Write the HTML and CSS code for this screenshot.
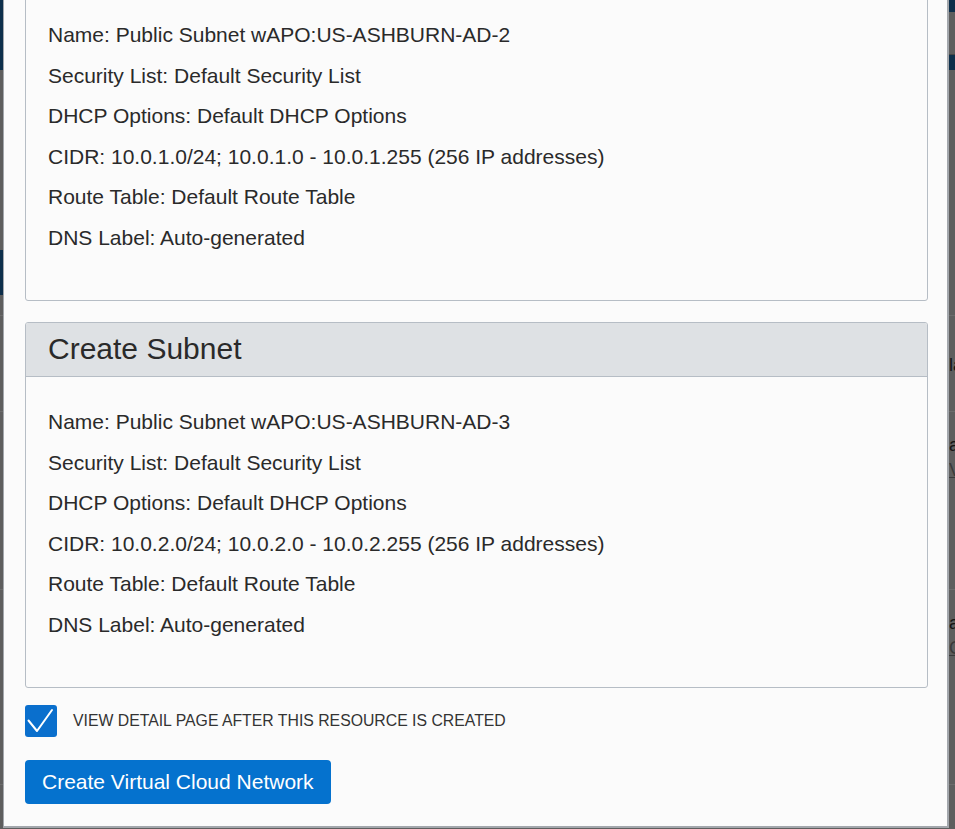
FILE: index.html
```html
<!DOCTYPE html>
<html lang="en">
<head>
<meta charset="utf-8">
<title>Create Virtual Cloud Network</title>
<link rel="stylesheet" href="styles.css">
</head>
<body>
<div class="backdrop">
  <div class="bg-head">
    <div class="bg-head-left"></div>
    <div class="bg-head-right">
      <div class="bg-topbar"></div>
      <div class="bg-nav"></div>
      <div class="bg-subbar"></div>
    </div>
  </div>
  <div class="bg-row ra">
    <div class="bg-left"><span class="bg-tab"></span></div>
    <div class="bg-right"></div>
  </div>
  <div class="bg-row rb">
    <div class="bg-left"></div>
    <div class="bg-right"><span class="frag f1">la</span></div>
  </div>
  <div class="bg-row rc">
    <div class="bg-left"></div>
    <div class="bg-right"><span class="frag f2">a</span><span class="frag link">V</span></div>
  </div>
  <div class="bg-row rd">
    <div class="bg-left"></div>
    <div class="bg-right"><span class="frag f2">a</span><span class="frag link">C</span></div>
  </div>
  <div class="bg-row re"></div>
</div>

<div class="modal">
  <section class="card">
    <header class="card-head">Create Subnet</header>
    <div class="card-body">
      <p>Name: Public Subnet wAPO:US-ASHBURN-AD-2</p>
      <p>Security List: Default Security List</p>
      <p>DHCP Options: Default DHCP Options</p>
      <p>CIDR: 10.0.1.0/24; 10.0.1.0 - 10.0.1.255 (256 IP addresses)</p>
      <p>Route Table: Default Route Table</p>
      <p>DNS Label: Auto-generated</p>
    </div>
  </section>

  <section class="card">
    <header class="card-head">Create Subnet</header>
    <div class="card-body">
      <p>Name: Public Subnet wAPO:US-ASHBURN-AD-3</p>
      <p>Security List: Default Security List</p>
      <p>DHCP Options: Default DHCP Options</p>
      <p>CIDR: 10.0.2.0/24; 10.0.2.0 - 10.0.2.255 (256 IP addresses)</p>
      <p>Route Table: Default Route Table</p>
      <p>DNS Label: Auto-generated</p>
    </div>
  </section>

  <label class="check-row">
    <span class="checkbox">
      <svg width="32" height="32" viewBox="0 0 32 32" aria-hidden="true">
        <path d="M3.5 15.5 L12 26 L27 5" fill="none" stroke="#ffffff" stroke-width="2" stroke-linecap="round" stroke-linejoin="round"/>
      </svg>
    </span>
    <span class="check-label">VIEW DETAIL PAGE AFTER THIS RESOURCE IS CREATED</span>
  </label>

  <button class="primary" type="button">Create Virtual Cloud Network</button>
</div>
</body>
</html>
```

FILE: styles.css
```css
* { box-sizing: border-box; }

html, body {
  margin: 0;
  padding: 0;
  height: 100%;
  overflow: hidden;
}

body {
  background: #5e5e5e;
  font-family: "Liberation Sans", Arial, sans-serif;
  color: #2a2a2a;
}

/* ---------- dimmed page behind the dialog ---------- */
.backdrop {
  display: flex;
  flex-direction: column;
  height: 829px;
  background: #5e5e5e;
}
.bg-head {
  height: 70px;
  display: flex;
  justify-content: space-between;
}
.bg-head-left {
  width: 3px;
  background: #0e2f4b;
}
.bg-head-right {
  width: 8px;
  display: flex;
  flex-direction: column;
}
.bg-topbar { height: 12px; background: #0e2f4b; }
.bg-nav { height: 43px; background: #5e5e5e; border-bottom: 1px solid #474747; }
.bg-subbar { height: 15px; background: #0e2f4b; }

.bg-row {
  display: flex;
  justify-content: space-between;
  border-bottom: 1px solid #6c6c6c;
}
.ra { height: 246px; }
.rb { height: 96px; }
.rc { height: 178px; }
.rd { height: 195px; }
.re { flex: 1; border-bottom: 0; }

.bg-left {
  width: 3px;
  display: flex;
  flex-direction: column;
}
.bg-tab {
  margin-top: 180px;
  height: 45px;
  background: #0e2f4b;
}
.bg-right {
  width: 6px;
  overflow: hidden;
  display: flex;
  flex-direction: column;
  font-size: 18px;
  line-height: 22px;
  color: #141414;
}
.frag { white-space: nowrap; }
.f1 { margin-top: 38px; }
.f2 { margin-top: 22px; }
.link { color: #3a3a3a; text-decoration: underline; margin-top: 3px; }

/* ---------- dialog ---------- */
.modal {
  position: absolute;
  left: 3px;
  top: -86px;
  width: 946px;
  background: #fbfbfb;
  border: 1px solid #a3a7ac;
  border-right-width: 2px;
  border-bottom-width: 2px;
  padding: 20px 19px 22px 21px;
  display: flex;
  flex-direction: column;
  align-items: flex-start;
}

.card {
  align-self: stretch;
  border: 1px solid #b6bdc5;
  border-radius: 3px;
  background: #fbfbfb;
  margin-bottom: 21.5px;
}
.card + .card { margin-bottom: 17px; }

.card-head {
  height: 54px;
  background: #dee1e4;
  border-bottom: 1px solid #b6bdc5;
  border-radius: 2px 2px 0 0;
  padding: 8px 22px 0;
  font-size: 30px;
  line-height: 36px;
  color: #2a2a2a;
}

.card-body {
  padding: 33px 22px 33.5px;
}
.card-body p {
  margin: 0 0 16.5px;
  font-size: 21px;
  line-height: 24px;
  color: #2a2a2a;
}

.check-row {
  display: flex;
  align-items: center;
  gap: 16px;
  margin-bottom: 23px;
}
.checkbox {
  width: 32px;
  height: 32px;
  border-radius: 3px;
  background: #0a6fcd;
  display: flex;
}
.check-label {
  font-size: 15.8px;
  color: #333;
}

.primary {
  height: 44px;
  padding: 0 17px;
  background: #0572ce;
  border: 0;
  border-radius: 4px;
  color: #ffffff;
  font-family: "Liberation Sans", Arial, sans-serif;
  font-size: 21px;
  line-height: 44px;
}
```
